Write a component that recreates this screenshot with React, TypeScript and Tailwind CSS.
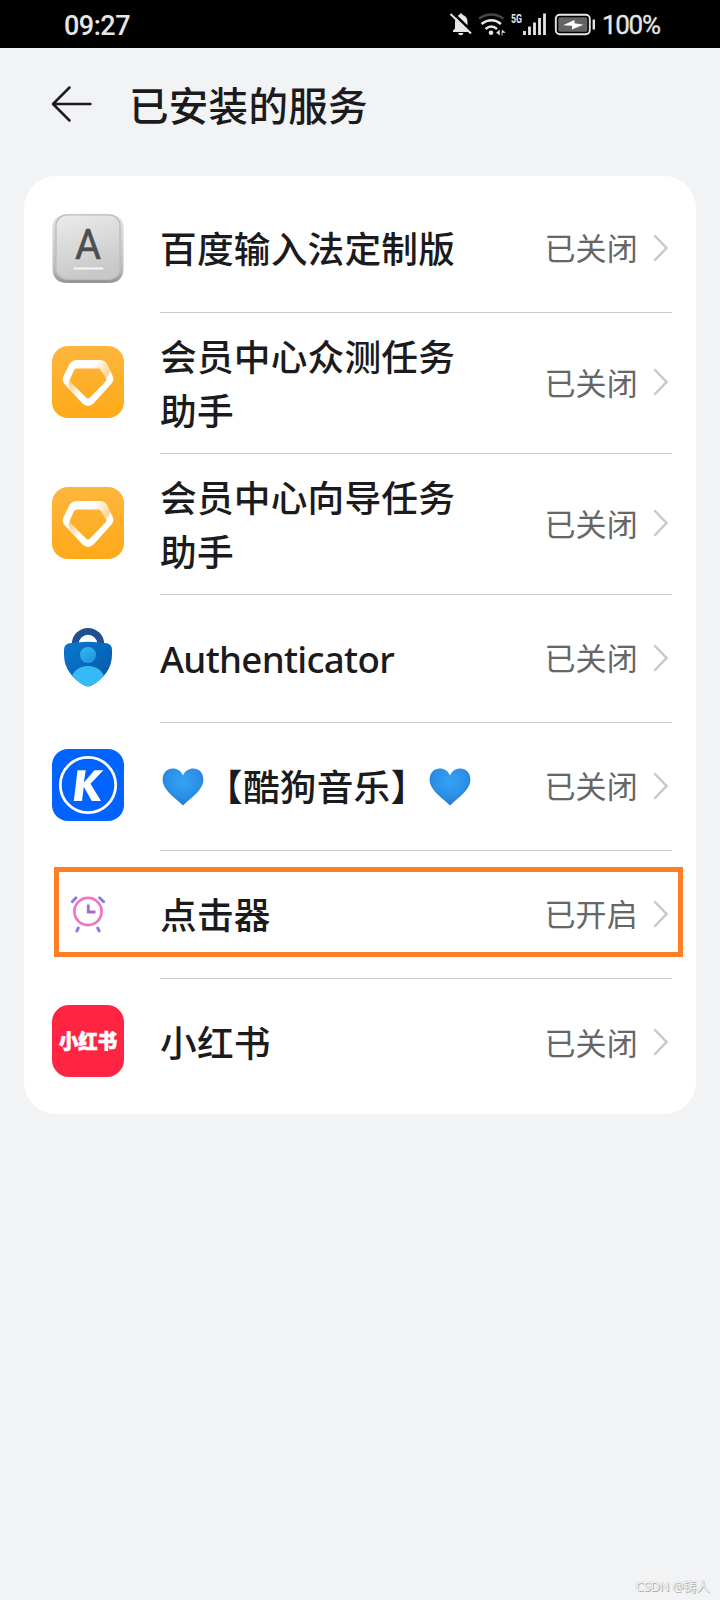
import type { ReactNode } from "react";

const KeyboardIcon = () => (
  <svg viewBox="0 0 72 72" className="mt-0.5 h-[72px] w-[72px]">
    <defs>
      <linearGradient id="keyBase" x1="0" y1="0" x2="0" y2="1">
        <stop offset="0" stopColor="#e4e4e4" />
        <stop offset="0.8" stopColor="#bdbdbd" />
        <stop offset="1" stopColor="#929292" />
      </linearGradient>
      <linearGradient id="keyTop" x1="0" y1="0" x2="0.3" y2="1">
        <stop offset="0" stopColor="#ececec" />
        <stop offset="1" stopColor="#c8c8c8" />
      </linearGradient>
    </defs>
    <path d="M.5 14Q2 3 14 2.500h44Q70 3 71.500 14v42q0 15-15 15h-41Q.5 71 .5 56Z" fill="url(#keyBase)" />
    <rect x="4" y="2.800" width="64" height="64.500" rx="11" fill="url(#keyTop)" stroke="#bcbcbc" strokeWidth="1.300" />
    <text x="36" y="46.500" textAnchor="middle" fontSize="42" fontWeight="400" fill="#4c4d50" stroke="#4c4d50" strokeWidth="0.600" fontFamily="Roboto, sans-serif" textLength="26" lengthAdjust="spacingAndGlyphs">A</text>
    <rect x="21.500" y="55.600" width="30" height="2" rx="1" fill="#f7f7f7" />
  </svg>
);

const MemberIcon = () => (
  <svg viewBox="0 0 72 72" className="h-[72px] w-[72px]">
    <defs>
      <linearGradient id="memberBg" x1="0" y1="0" x2="0" y2="1">
        <stop offset="0" stopColor="#fdb63c" />
        <stop offset="1" stopColor="#fea918" />
      </linearGradient>
      <linearGradient id="foldRight" gradientUnits="userSpaceOnUse" x1="55" y1="27" x2="42" y2="18">
        <stop offset="0" stopColor="#fbb03b" stopOpacity="0.5" />
        <stop offset="1" stopColor="#fbb03b" stopOpacity="0" />
      </linearGradient>
      <linearGradient id="foldLeft" gradientUnits="userSpaceOnUse" x1="18" y1="36" x2="29" y2="48">
        <stop offset="0" stopColor="#fbb03b" stopOpacity="0.65" />
        <stop offset="1" stopColor="#fbb03b" stopOpacity="0" />
      </linearGradient>
    </defs>
    <rect width="72" height="72" rx="16" fill="url(#memberBg)" />
    <path d="M25 14H48Q53 14 55.500 19L60.500 29.500Q62.500 34 59.500 37.500L42 57Q36 63 30 57L12.500 38Q9.500 34.500 11.500 30L17 19Q19.500 14 25 14ZM24.500 22.500Q22.800 22.500 22 24.300L18 33Q17.500 34.500 18.500 36L34 51.500Q36 53.500 38 51.500L53.500 35.500Q55 34 54 32.300L49 24.300Q48 22.500 46.500 22.500Z" fill="#fff" fillRule="evenodd" />
    <path d="M40 14H48Q53 14 55.500 19L58 24.500Q58 29 54 32.300L49 24.300Q48 22.500 46.500 22.500H40Z" fill="url(#foldRight)" />
    <path d="M18 33Q17.500 34.500 18.500 36L34 51.500L27.500 54L18.500 44Q15.500 38 18 33Z" fill="url(#foldLeft)" />
  </svg>
);

const AuthenticatorIcon = () => (
  <svg viewBox="0 0 72 72" className="mt-px h-[72px] w-[72px]">
    <defs>
      <linearGradient id="lockBody" x1="0" y1="0" x2="1" y2="1">
        <stop offset="0" stopColor="#0a78d0" />
        <stop offset="0.500" stopColor="#0768bd" />
        <stop offset="1" stopColor="#0d4f97" />
      </linearGradient>
      <linearGradient id="lockHead" x1="0" y1="0" x2="0.600" y2="1">
        <stop offset="0" stopColor="#34b7f0" />
        <stop offset="1" stopColor="#2297e0" />
      </linearGradient>
      <clipPath id="lockClip">
        <path d="M12 28q0-5.500 5-6.800 19-3 38 0 5 1.300 5 6.800v5c0 14-9 24-20.500 30.500q-3.500 1.700-7 0C21 57 12 47 12 33Z" />
      </clipPath>
    </defs>
    <path d="M23.300 24v-2a12.700 12.700 0 0 1 25.400 0v2" fill="none" stroke="#20508f" strokeWidth="6.800" />
    <g clipPath="url(#lockClip)">
      <rect x="10" y="18" width="52" height="50" fill="url(#lockBody)" />
      <circle cx="36" cy="33" r="8" fill="url(#lockHead)" />
      <ellipse cx="36" cy="57.500" rx="16.500" ry="13.500" fill="#36baf5" />
    </g>
  </svg>
);

const KugouIcon = () => (
  <svg viewBox="0 0 72 72" className="h-[72px] w-[72px]">
    <rect width="72" height="72" rx="16" fill="#0062ff" />
    <circle cx="36" cy="36" r="27.700" fill="none" stroke="#fff" strokeWidth="2.800" />
    <path d="M25.500 21.300h8.200l-1.800 12.200 10.500-12.200h9L38.500 34.800 49 52H39.800l-8-14.200L30 52h-8.200Z" fill="#fff" />
  </svg>
);

const ClockIcon = () => (
  <svg viewBox="0 0 72 72" className="h-[72px] w-[72px]" fill="none">
    <circle cx="36" cy="34.500" r="13.600" stroke="#ee75c5" strokeWidth="2.700" />
    <path d="M36.300 27.500v7.500h7.200" stroke="#a66bd8" strokeWidth="2.900" />
    <path d="M20.300 24.700l3.700-4M51.700 24.700l-4.200-4M26.300 51l-1.500 3M45.700 51l1.500 3" stroke="#9277df" strokeWidth="2.900" strokeLinecap="round" />
  </svg>
);

const RedBookIcon = () => (
  <div className="flex h-[72px] w-[72px] items-center justify-center rounded-[17px] bg-[#ff2442]">
    <svg viewBox="0 0 66 34" className="h-[34px] w-[66px]">
      <text x="4" y="24.500" fontSize="20.500" fontWeight="900" fill="#fff" stroke="#fff" strokeWidth="0.700" fontFamily="'Noto Sans CJK SC', sans-serif" textLength="58" lengthAdjust="spacingAndGlyphs">小红书</text>
    </svg>
  </div>
);

const Heart = () => (
  <svg viewBox="0 0 46 40" className="h-10 w-[46px] shrink-0">
    <defs>
      <radialGradient id="heartFill" cx="0.500" cy="0.350" r="0.650">
        <stop offset="0" stopColor="#35a3f6" />
        <stop offset="0.600" stopColor="#2c90e8" />
        <stop offset="1" stopColor="#2b79c8" />
      </radialGradient>
    </defs>
    <path d="M23 8.500C19.500-1.500 2.600-1.500 2.600 13c0 9.500 11.400 17 20.400 25.500C32 30 43.400 22.500 43.400 13 43.400-1.500 26.500-1.500 23 8.500Z" fill="url(#heartFill)" />
  </svg>
);

const services: { icon: ReactNode; name: ReactNode; status: string; tall?: boolean; active?: boolean }[] = [
  { icon: <KeyboardIcon />, name: "百度输入法定制版", status: "已关闭" },
  { icon: <MemberIcon />, name: "会员中心众测任务助手", status: "已关闭", tall: true },
  { icon: <MemberIcon />, name: "会员中心向导任务助手", status: "已关闭", tall: true },
  { icon: <AuthenticatorIcon />, name: <span className="tracking-[-0.7px]">Authenticator</span>, status: "已关闭" },
  {
    icon: <KugouIcon />,
    name: (
      <span className="flex items-center whitespace-nowrap">
        <Heart />
        <span>【酷狗音乐】</span>
        <Heart />
      </span>
    ),
    status: "已关闭",
  },
  { icon: <ClockIcon />, name: "点击器", status: "已开启", active: true },
  { icon: <RedBookIcon />, name: "小红书", status: "已关闭" },
];

const StatusBar = () => (
  <header className="flex h-12 items-center bg-black pl-16 font-['Roboto',sans-serif] text-[#e6e6e6]">
    <span className="pt-1 text-[27px] leading-none font-medium tracking-[-0.5px]">09:27</span>
    <svg viewBox="449 0 150 48" className="ml-auto h-12 w-[150px]">
      {/* muted bell */}
      <path d="M453 32v-1.500l2-2V22c0-4 2-6.500 4.500-7.300a1.500 1.500 0 0 1 3 0C465.500 15.500 467.500 18 467.500 22v6.500l2 2V32ZM458 33h5.500q-.5 2.200-2.700 2.200T458 33Z" fill="#e6e6e6" />
      <path d="M453 13l20 19.500" stroke="#000" strokeWidth="2.500" />
      <path d="M450.500 14l20.500 19.500" stroke="#e6e6e6" strokeWidth="2" />
      {/* wifi */}
      <g fill="none" strokeWidth="2.500">
        <path d="M479 18.500q12.500-8 24.500 0" stroke="#474747" />
        <path d="M481.500 24q10-7.500 19.500 0" stroke="#e6e6e6" />
        <path d="M485.500 29q6-5 11.500 0" stroke="#e6e6e6" />
      </g>
      <circle cx="491" cy="32.800" r="2.300" fill="#e6e6e6" />
      <path d="M499.500 30v5l-3-2.300ZM502 30l3.200 2.500h-3.200v3Z" fill="#e6e6e6" stroke="#e6e6e6" strokeWidth=".5" />
      <text x="511" y="22.800" fontSize="13" fontWeight="700" fill="#e6e6e6" textLength="11" lengthAdjust="spacingAndGlyphs">5G</text>
      <path d="M524.500 31v4M529.500 26.500V35M534.500 22.500V35M539.500 18V35M544.500 13.500V35" stroke="#e6e6e6" strokeWidth="2.800" />
      {/* battery */}
      <rect x="555.800" y="14.800" width="34" height="19.500" rx="4" fill="none" stroke="#e6e6e6" strokeWidth="1.900" />
      <rect x="558.300" y="17.300" width="29" height="14.500" rx="1.500" fill="#646464" />
      <path d="M563 25.300l11.500-5.300v3.200l9 1.500L572 29.500v-3.700Z" fill="#fff" />
      <path d="M593.800 19.500v10" stroke="#e6e6e6" strokeWidth="2.400" />
    </svg>
    <span className="ml-[3px] w-[118px] pt-0.5 text-[26px] leading-none tracking-[-1.3px] [-webkit-text-stroke:0.3px_#e6e6e6]">100%</span>
  </header>
);

export default function App() {
  return (
    <div className="flex h-[1600px] w-[720px] flex-col overflow-hidden bg-[#f1f3f5] font-['Noto_Sans','Noto_Sans_CJK_SC',sans-serif]">
      <StatusBar />

      <div className="flex h-32 items-center pb-4 pl-[51px]">
        <svg viewBox="0 0 42 40" className="h-10 w-[42px]" fill="none" stroke="#1b1b1d" strokeWidth="2.500" strokeLinecap="round" strokeLinejoin="round">
          <path d="M39.500 20H2.500M18.500 3.500L2 20l16.500 16.500" />
        </svg>
        <h1 className="ml-9 font-['Noto_Sans_CJK_SC',sans-serif] text-[39.5px] leading-none font-medium tracking-[0.3px] text-[#1b1b1d]">已安装的服务</h1>
      </div>

      <main className="mx-6 flex h-[938px] flex-col rounded-[32px] bg-white pt-[9px]">
        {services.map((service, i) => (
          <section key={i} className={`relative flex pr-6 pl-7 ${service.tall ? "h-[141px]" : "h-32"}`}>
            <div className="flex items-center pb-1">{service.icon}</div>
            <div className={`ml-9 flex flex-1 items-center justify-between ${i < services.length - 1 ? "border-b border-[#cccccc]" : ""}`}>
              <div className={`w-[318px] text-[36.7px] leading-[54px] font-medium tracking-[0.2px] text-[#1b1b1d] ${service.tall ? "pt-0.5" : ""}`}>{service.name}</div>
              <div className="flex items-center">
                <span className="text-[31px] leading-none tracking-[0.2px] text-[#666666]">{service.status}</span>
                <svg viewBox="0 0 16 28" className="mr-[3px] mb-0.5 ml-[15px] h-7 w-4" fill="none" stroke="#c9c9c9" strokeWidth="2.500" strokeLinecap="round">
                  <path d="M2 2l11.500 12L2 26" />
                </svg>
              </div>
            </div>
            {service.active && <div className="absolute top-4 left-[30px] h-[90px] w-[629px] border-5 border-[#ff7f27]" />}
          </section>
        ))}
      </main>

      <footer className="mt-auto mb-1.5 pr-[11px] text-right text-[13px] leading-[16px] tracking-[-0.3px] text-[#f6f6f6] [text-shadow:1px_1px_0_#b0b0b0,0_0_1px_#aaaaaa]">CSDN @铸人</footer>
    </div>
  );
}
